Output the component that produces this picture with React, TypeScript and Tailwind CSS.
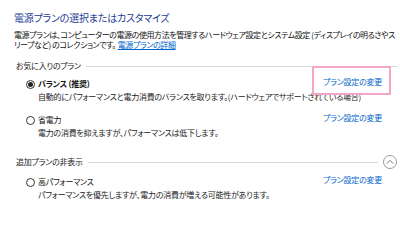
const plans = [
  {
    name: "バランス (推奨)",
    bold: true,
    checked: true,
    marked: true,
    description:
      "自動的にパフォーマンスと電力消費のバランスを取ります。(ハードウェアでサポートされている場合)",
  },
  {
    name: "省電力",
    bold: false,
    checked: false,
    marked: false,
    description: "電力の消費を抑えますが、パフォーマンスは低下します。",
  },
];

const hidden = [
  {
    name: "高パフォーマンス",
    bold: false,
    checked: false,
    marked: false,
    description: "パフォーマンスを優先しますが、電力の消費が増える可能性があります。",
  },
];

function Radio({ checked }: { checked: boolean }) {
  return (
    <span className="flex h-[9px] w-[9px] shrink-0 items-center justify-center rounded-full border border-[#333]">
      {checked && <span className="h-[5px] w-[5px] rounded-full bg-[#222]" />}
    </span>
  );
}

type Plan = (typeof plans)[number];

function PlanRow({ plan }: { plan: Plan }) {
  return (
    <div className="flex flex-col">
      <div className="flex items-start justify-between">
        <div className="flex items-center gap-[3px] pt-[4px]">
          <Radio checked={plan.checked} />
          <span className={plan.bold ? "font-bold text-[#111]" : "text-[#111]"}>{plan.name}</span>
        </div>
        <span className="relative pt-[2px] text-[#0066cc]">
          プラン設定の変更
          {plan.marked && (
            <span className="absolute -top-[9px] -bottom-[8px] -left-[11px] -right-[9px] border-[2px] border-[#f2a7c9]" />
          )}
        </span>
      </div>
      <p className="pl-[12px] pt-[3px] text-[#222]">{plan.description}</p>
    </div>
  );
}

function Divider({ label, collapse }: { label: string; collapse?: boolean }) {
  return (
    <div className="flex items-center gap-[5px] text-[#222]">
      <span>{label}</span>
      <span className="h-px flex-1 bg-[#d7d7d7]" />
      {collapse && (
        <span className="flex h-[14px] w-[14px] items-center justify-center rounded-full border border-[#9a9a9a]">
          <svg width="8" height="6" viewBox="0 0 8 6" fill="none">
            <path d="M0.8 4.6 L4 1.4 L7.2 4.6" stroke="#777" strokeWidth="1" />
          </svg>
        </span>
      )}
    </div>
  );
}

export default function App() {
  return (
    <div
      className="flex h-[241px] w-[400px] flex-col bg-white pl-[14px] pr-[3px] pt-[10px] text-[8px] leading-[10px] tracking-[-0.25px] [font-feature-settings:'palt']"
      style={{ fontFamily: '"Noto Sans CJK JP", "Noto Sans", sans-serif' }}
    >
      <h1 className="text-[10px] leading-[15px] tracking-[-0.2px] text-[#1e3c96]">
        電源プランの選択またはカスタマイズ
      </h1>
      <p className="mt-[5px] tracking-[-0.42px] text-[#111]">
        電源プランは、コンピューターの電源の使用方法を管理するハードウェア設定とシステム設定 (ディスプレイの明るさやスリープなど) のコレクションです。
        <span className="ml-[2px] text-[#0066cc] underline">電源プランの詳細</span>
      </p>

      <div className="mt-[11px] pl-[2px]">
        <Divider label="お気に入りのプラン" />
      </div>
      <div className="flex flex-col gap-[9px] pl-[12px] pr-[15px] pt-[4px]">
        {plans.map((p) => (
          <PlanRow key={p.name} plan={p} />
        ))}
      </div>

      <div className="mt-[17px] pl-[2px]">
        <Divider label="追加プランの非表示" collapse />
      </div>
      <div className="flex flex-col pl-[12px] pr-[15px] pt-[4px]">
        {hidden.map((p) => (
          <PlanRow key={p.name} plan={p} />
        ))}
      </div>
    </div>
  );
}
